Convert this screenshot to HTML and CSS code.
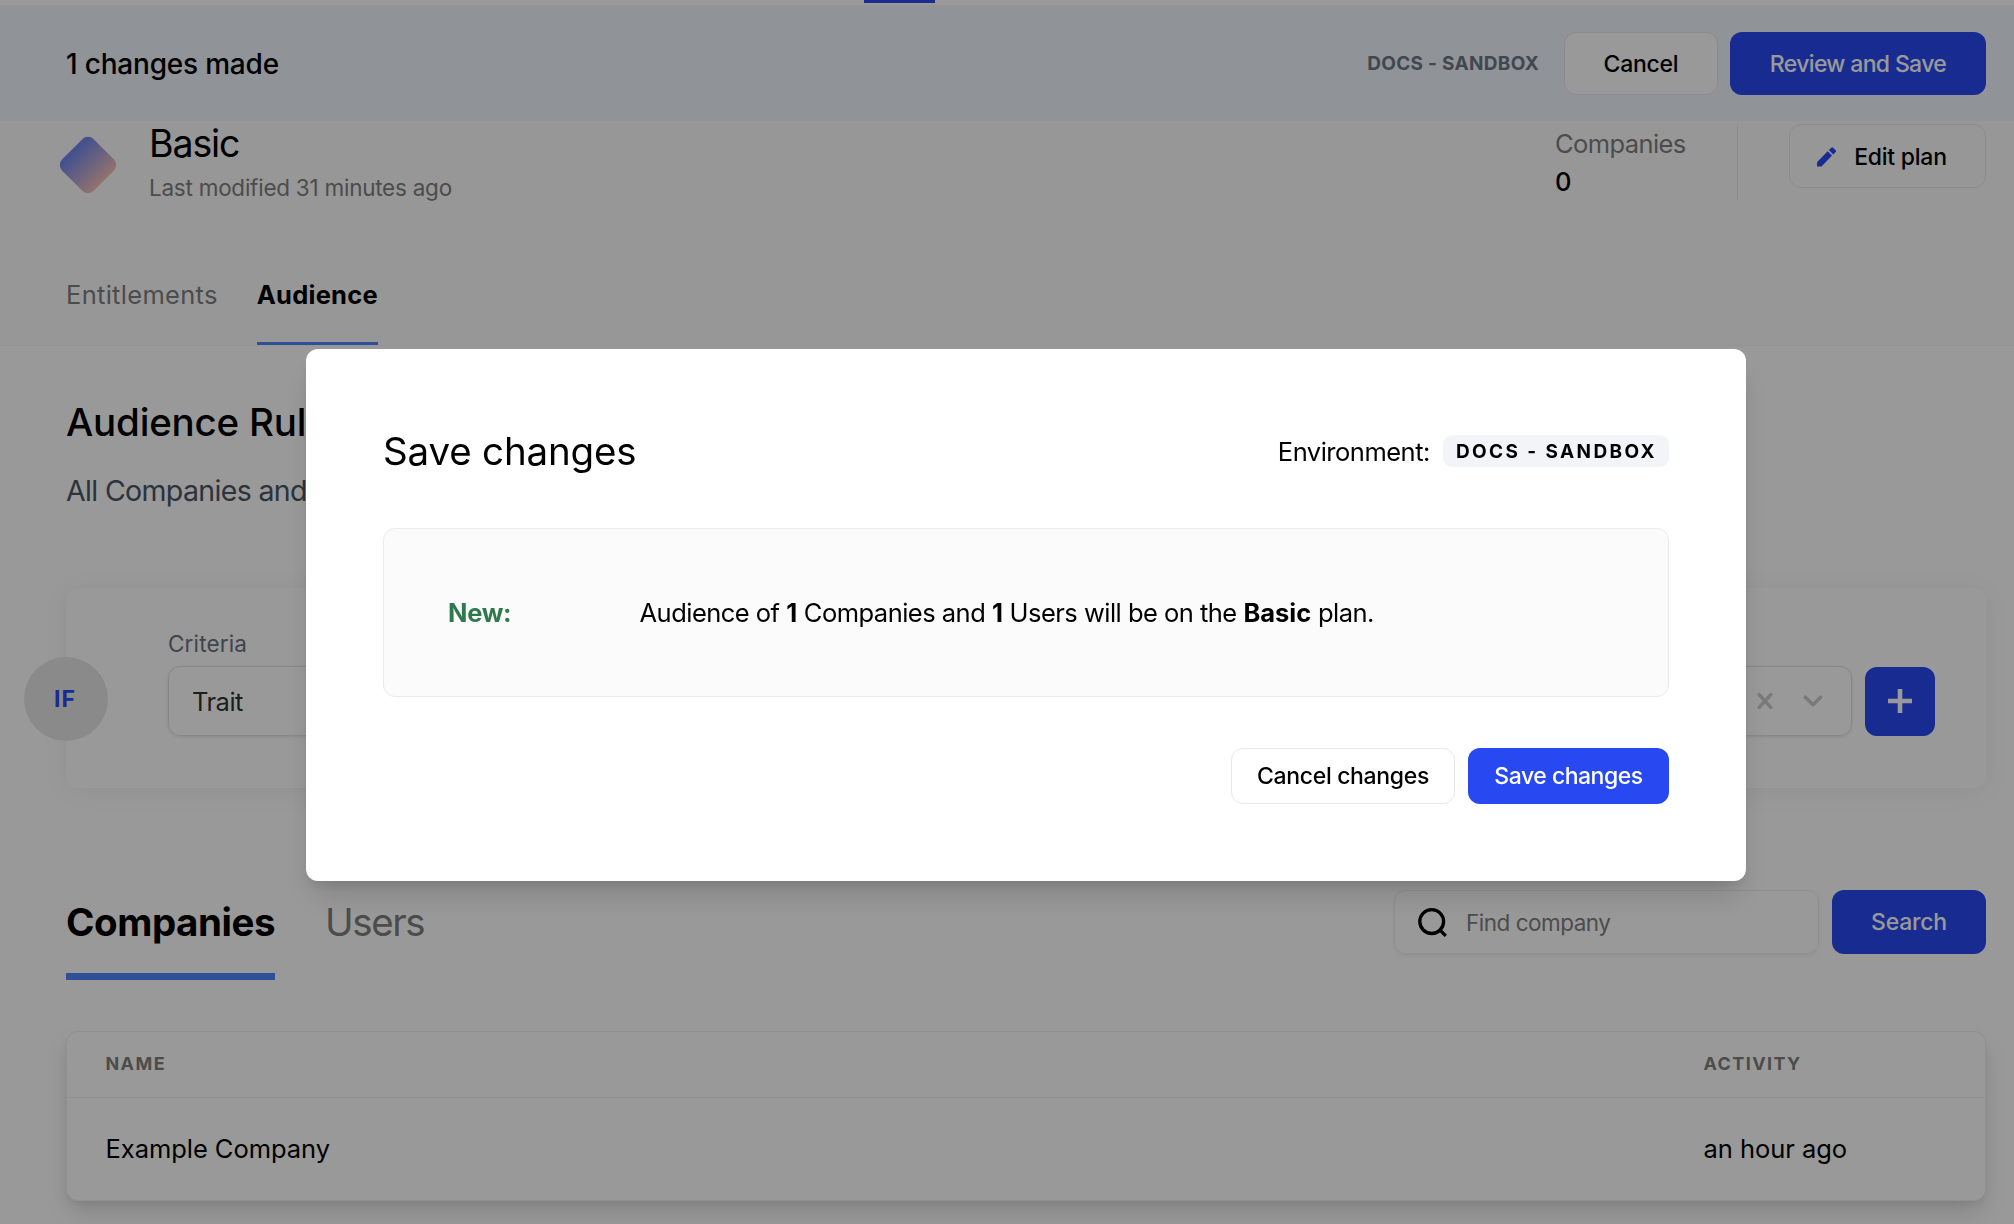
FILE: index.html
```html
<!DOCTYPE html>
<html lang="en">
<head>
<meta charset="utf-8">
<title>Basic plan - Audience</title>
<link rel="stylesheet" href="styles.css">
</head>
<body>
<div class="page">
  <div class="topnav"><div class="topnav-active"></div></div>
  <header class="changes-bar">
    <div class="changes-title">1 changes made</div>
    <div class="changes-actions">
      <span class="env-name">DOCS - SANDBOX</span>
      <button class="btn btn-plain btn-cancel">Cancel</button>
      <button class="btn btn-primary btn-review">Review and Save</button>
    </div>
  </header>

  <section class="plan-head">
    <div class="plan-row">
      <svg class="plan-icon" width="58" height="58" viewBox="0 0 58 58">
        <defs><linearGradient id="g" x1="0" y1="0.5" x2="1" y2="0.5"><stop offset="0.08" stop-color="#7288ec"/><stop offset="1" stop-color="#f3bfb8"/></linearGradient></defs>
        <g transform="rotate(45 29 29)"><rect x="6.75" y="6.75" width="44.5" height="44.5" rx="8" fill="url(#g)"/></g>
      </svg>
      <div class="plan-text">
        <h1 class="plan-name">Basic</h1>
        <p class="plan-modified">Last modified 31 minutes ago</p>
      </div>
      <div class="plan-stat">
        <div class="stat-label">Companies</div>
        <div class="stat-value">0</div>
      </div>
      <button class="btn btn-plain btn-edit">
        <svg width="22" height="22" viewBox="0 0 22 22" fill="#2849f2"><path d="M1 16.2 L11.7 5.3 L16 9.6 L5.5 20.5 H1 Z"/><path d="M12.9 4.1 L15.3 1.7 Q16.2 .8 17.1 1.7 L19.7 4.2 Q20.6 5.1 19.7 6 L17.2 8.4 Z"/></svg>
        <span>Edit plan</span>
      </button>
    </div>
    <nav class="tabs">
      <a class="tab">Entitlements</a>
      <a class="tab tab-active">Audience</a>
    </nav>
  </section>

  <main class="content">
    <h2 class="rules-title">Audience Rules</h2>
    <p class="rules-sub">All Companies and Users</p>

    <section class="rule-card">
      <div class="if-badge">IF</div>
      <div class="rule-body">
        <div class="criteria">Criteria</div>
        <div class="rule-row">
          <div class="select">
            <span class="select-value">Trait</span>
            <svg class="icon-x" width="18" height="18" viewBox="0 0 18 18" fill="none" stroke="#ccc" stroke-width="3.6" stroke-linecap="round"><path d="M3.2 2.6 L14.8 15.4 M14.8 2.6 L3.2 15.4"/></svg>
            <svg class="icon-chev" width="20" height="12" viewBox="0 0 20 12" fill="none" stroke="#ccc" stroke-width="3.5" stroke-linecap="round" stroke-linejoin="round"><path d="M2.4 2.2 L10 9.8 L17.6 2.2"/></svg>
          </div>
          <button class="btn btn-primary btn-add"><svg width="24" height="24" viewBox="0 0 24 24" stroke="#fff" stroke-width="4.6"><path d="M12 0 V24 M0 12 H24"/></svg></button>
        </div>
      </div>
    </section>

    <div class="list-head">
      <nav class="big-tabs">
        <a class="big-tab big-tab-active">Companies</a>
        <a class="big-tab big-tab-idle">Users</a>
      </nav>
      <div class="search">
        <div class="search-input">
          <svg width="30" height="31" viewBox="0 0 30 31" fill="none" stroke="#000" stroke-width="3.3"><circle cx="13.7" cy="14.6" r="11.9"/><path d="M21.8 22.8 L27.8 28.8"/></svg>
          <span>Find company</span>
        </div>
        <button class="btn btn-primary btn-search">Search</button>
      </div>
    </div>

    <div class="table">
      <div class="table-row table-th"><span>NAME</span><span>ACTIVITY</span></div>
      <div class="table-row table-td"><span>Example Company</span><span>an hour ago</span></div>
    </div>
  </main>
</div>

<div class="overlay">
  <div class="modal">
    <div class="modal-head">
      <h3 class="modal-title">Save changes</h3>
      <div class="modal-env"><span class="modal-env-label">Environment:</span><span class="badge">DOCS - SANDBOX</span></div>
    </div>
    <div class="summary">
      <span class="summary-key">New:</span>
      <span class="summary-text">Audience of <b>1</b> Companies and <b>1</b> Users will be on the <b>Basic</b> plan.</span>
    </div>
    <div class="modal-actions">
      <button class="btn btn-plain btn-modal-cancel">Cancel changes</button>
      <button class="btn btn-primary btn-modal-save">Save changes</button>
    </div>
  </div>
</div>
</body>
</html>
```
FILE: styles.css
```css
* { box-sizing: border-box; }
html, body { margin: 0; height: 1224px; overflow: hidden; }
body { font-family: Inter, "Liberation Sans", sans-serif; color: #000; background: #fff; }
h1, h2, h3, p { margin: 0; font-weight: 400; }
.page { width: 2014px; height: 1224px; overflow: hidden; }

.topnav { height: 7px; padding-left: 864px; border-bottom: 2px solid #f7f7f7; }
.topnav-active { width: 71px; height: 3px; background: #2849f2; }

.changes-bar { display: flex; align-items: center; justify-content: space-between; height: 114px; padding: 0 28px 0 66px; background: #f0f5fd; }
.changes-title { font-size: 28px; font-weight: 500; letter-spacing: -0.2px; }
.changes-actions { display: flex; align-items: center; padding-bottom: 1px; }
.env-name { margin-right: 25px; color: #6f7784; font-size: 19px; font-weight: 700; letter-spacing: 0.3px; }

.btn { display: flex; align-items: center; justify-content: center; padding: 0; border: 0; border-radius: 12px; font-family: inherit; font-size: 23px; font-weight: 500; white-space: nowrap; }
.btn-plain { background: #fff; border: 1px solid #e8e8e8; color: #000; }
.btn-primary { background: #2849f2; color: #fff; }
.btn-cancel { width: 154px; height: 63px; margin-right: 12px; letter-spacing: -0.25px; }
.btn-review { width: 256px; height: 63px; letter-spacing: -0.65px; }

.plan-head { height: 225px; background: #fcfcfc; border-bottom: 1px solid #f7f7f7; }
.plan-row { display: flex; align-items: flex-start; height: 139px; padding: 3px 28px 0 59px; }
.plan-icon { margin-top: 12px; }
.plan-text { flex: 1; padding-left: 32px; }
.plan-name { height: 40px; line-height: 40px; font-size: 37.5px; letter-spacing: -1.1px; }
.plan-modified { margin-top: 10px; line-height: 28px; font-size: 22.5px; letter-spacing: -0.25px; color: #7f7f7f; }
.plan-stat { width: 183px; height: 77px; border-right: 1px solid #ebebeb; font-size: 25.5px; }
.stat-label { line-height: 39px; letter-spacing: -0.6px; color: #7f7f7f; }
.stat-value { line-height: 38px; font-weight: 500; }
.btn-edit { width: 197px; height: 64px; margin-left: 51px; padding: 1px 12px 0 0; gap: 16px; background: transparent; letter-spacing: -0.25px; }

.tabs { display: flex; gap: 39px; height: 85px; padding-left: 66px; }
.tab { height: 85px; line-height: 70px; font-size: 25.5px; letter-spacing: 0.3px; color: #7f7f7f; }
.tab-active { color: #000; font-weight: 700; letter-spacing: 0.25px; border-bottom: 3px solid #4e85fa; }

.content { padding: 54px 28px 0 66px; }
.rules-title { line-height: 44px; font-size: 38.5px; font-weight: 500; letter-spacing: -0.2px; }
.rules-sub { margin-top: 30px; line-height: 34px; font-size: 28.5px; letter-spacing: -0.65px; color: #4b5563; }

.rule-card { display: flex; align-items: flex-start; height: 200px; margin-top: 80px; border-radius: 12px; background: #fff; box-shadow: 0 3px 26px rgba(0, 0, 0, .06); }
.if-badge { flex: none; width: 84px; height: 84px; margin: 69px 0 0 -42px; padding-right: 2px; border-radius: 50%; background: #e6e6e6; color: #2849f2; font-size: 23px; font-weight: 700; line-height: 84px; text-align: center; letter-spacing: 1px; }
.rule-body { flex: 1; padding: 42px 51px 0 60px; }
.criteria { height: 36px; line-height: 28px; font-size: 22.5px; letter-spacing: 0.15px; color: #6b7280; }
.rule-row { display: flex; gap: 13px; align-items: center; }
.select { flex: 1; display: flex; align-items: center; height: 70px; padding: 0 28px 0 23px; border: 1px solid #e2e2e2; border-radius: 12px; box-shadow: 0 1px 3px rgba(0, 0, 0, .1); }
.select-value { flex: 1; font-size: 25.5px; letter-spacing: -0.5px; color: #333; }
.icon-chev { margin-left: 29px; }
.btn-add { width: 70px; height: 69px; }

.list-head { display: flex; justify-content: space-between; margin-top: 102px; height: 141px; }
.big-tabs { display: flex; gap: 50px; height: 90px; }
.big-tab { height: 90px; line-height: 64px; font-size: 38.5px; color: #7f7f7f; }
.big-tab-active { color: #000; font-weight: 700; letter-spacing: -0.45px; border-bottom: 7px solid #4e85fa; }
.big-tab-idle { letter-spacing: -1.45px; }
.search { display: flex; gap: 13px; }
.search-input { display: flex; align-items: center; gap: 18px; width: 425px; height: 64px; padding-left: 23px; border: 1px solid #efefef; border-radius: 12px; box-shadow: 0 2px 4px rgba(0, 0, 0, .06); font-size: 22.5px; letter-spacing: -0.5px; color: #7f7f7f; }
.btn-search { width: 154px; height: 64px; letter-spacing: -0.2px; }

.table { height: 170px; border: 1px solid #f1f1f1; border-radius: 12px; background: #fff; box-shadow: 0 13px 24px -3px rgba(0, 0, 0, .14), 0 4px 8px -2px rgba(0, 0, 0, .07); }
.table-row { display: grid; grid-template-columns: 1598px 1fr; align-items: center; padding: 0 0 2px 38.5px; }
.table-th { height: 66px; border-bottom: 1px solid #f0f0f0; font-size: 18px; font-weight: 700; letter-spacing: 1.4px; color: #7f7f7f; }
.table-td { height: 102px; font-size: 25.5px; letter-spacing: -0.05px; }

.overlay { position: fixed; inset: 0; padding: 349px 0 0 306px; background: rgba(0, 0, 0, .4); }
.modal { width: 1440px; height: 532px; padding: 77px; border-radius: 12px; background: #fff; box-shadow: 0 20px 32px -6px rgba(0, 0, 0, .14), 0 8px 12px -4px rgba(0, 0, 0, .1); }
.modal-head { display: flex; justify-content: space-between; align-items: center; height: 50px; }
.modal-title { font-size: 38.5px; letter-spacing: -0.17px; }
.modal-env { display: flex; align-items: center; gap: 13px; font-size: 25.5px; }
.modal-env-label { letter-spacing: -0.5px; }
.badge { height: 32px; padding: 0 12px 0 13px; border-radius: 9px; background: #f3f4f8; font-size: 19px; font-weight: 700; line-height: 34px; letter-spacing: 2.4px; }
.summary { display: flex; align-items: center; height: 169px; margin-top: 52px; padding: 0 64px; border: 1px solid #ebebeb; border-radius: 12px; background: #fbfbfb; font-size: 25.5px; }
.summary-key { width: 191.5px; font-weight: 700; letter-spacing: -0.3px; color: #2f7a4d; }
.summary-text { letter-spacing: -0.52px; }
.summary-text b { letter-spacing: 0; }
.modal-actions { display: flex; justify-content: flex-end; gap: 13px; margin-top: 51px; }
.btn-modal-cancel { width: 224px; height: 56px; letter-spacing: -0.33px; }
.btn-modal-save { width: 201px; height: 56px; letter-spacing: -0.48px; }
```
